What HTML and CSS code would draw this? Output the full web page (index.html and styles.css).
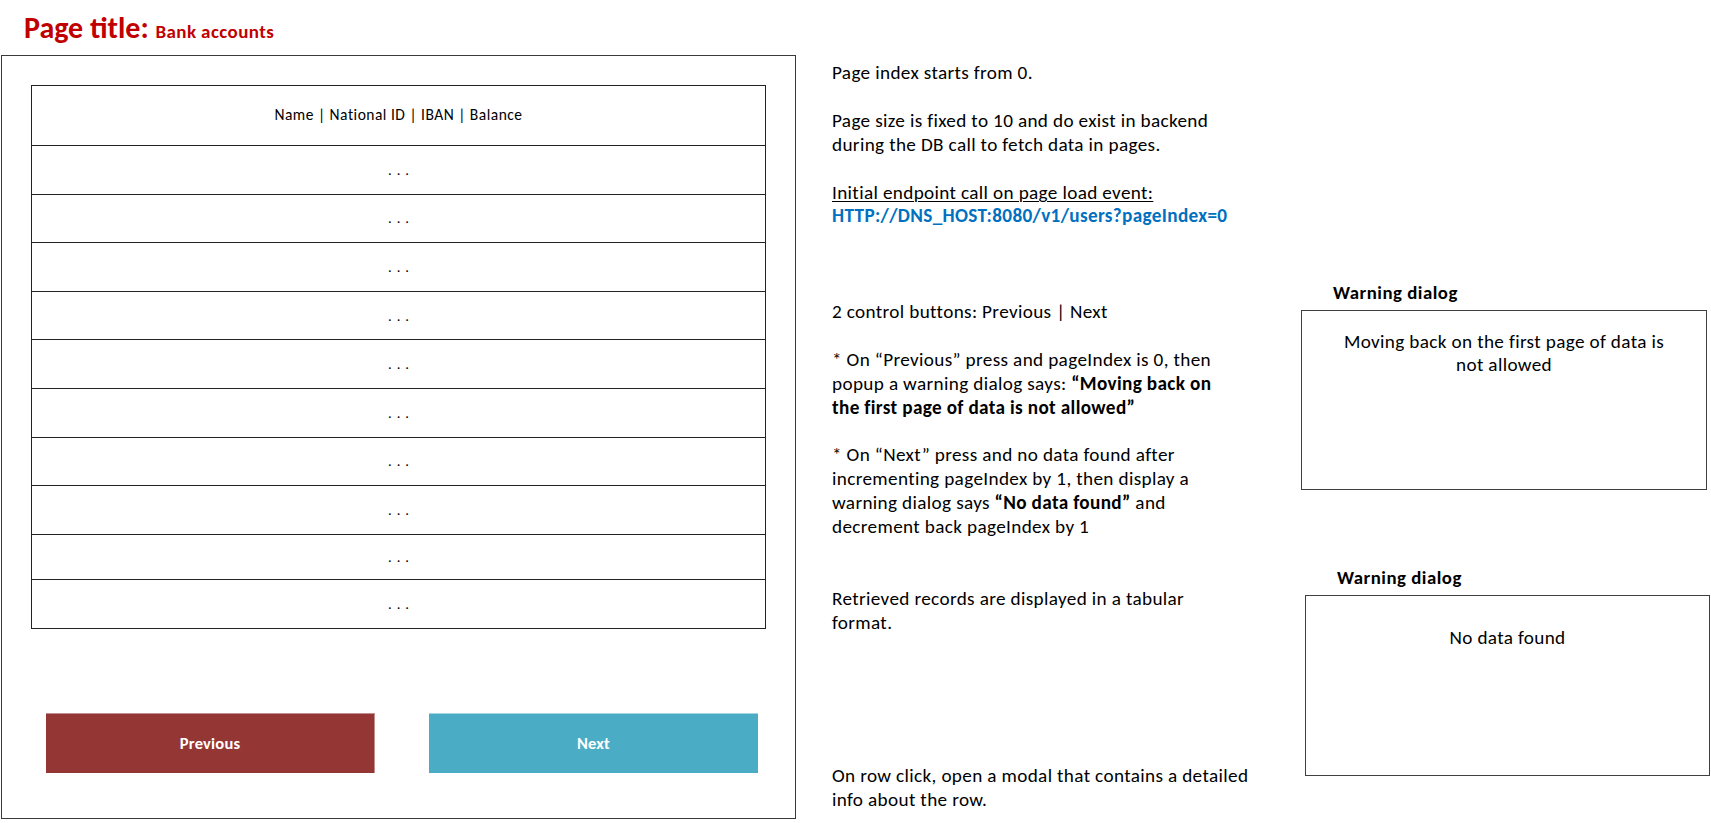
FILE: index.html
```html
<!DOCTYPE html>
<html lang="en">
<head>
<meta charset="utf-8">
<title>Bank accounts – paging spec</title>
<link rel="stylesheet" href="styles.css">
</head>
<body>
<div class="page">
  <section class="mock">
    <h1 class="title">Page title: <span class="title-sub">Bank accounts</span></h1>
    <div class="frame">
      <div class="table">
        <div class="row head">Name | National ID | IBAN | Balance</div>
        <div class="row">...</div>
        <div class="row">...</div>
        <div class="row">...</div>
        <div class="row">...</div>
        <div class="row">...</div>
        <div class="row">...</div>
        <div class="row">...</div>
        <div class="row">...</div>
        <div class="row short">...</div>
        <div class="row">...</div>
      </div>
      <div class="controls">
        <button class="btn btn-prev" type="button">Previous</button>
        <button class="btn btn-next" type="button">Next</button>
      </div>
    </div>
  </section>

  <section class="notes">
    <p>Page index starts from 0.</p>
    <p class="gap1">Page size is fixed to 10 and do exist in backend<br>during the DB call to fetch data in pages.</p>
    <p class="gap1"><span class="ul">Initial endpoint call on page load event:</span><br><strong class="url">HTTP://DNS_HOST:8080/v1/users?pageIndex=0</strong></p>
    <p class="gap3">2 control buttons: Previous | Next</p>
    <p class="gap1">* On “Previous” press and pageIndex is 0, then<br>popup a warning dialog says: <strong>“Moving back on<br>the first page of data is not allowed”</strong></p>
    <p class="gap1">* On “Next” press and no data found after<br>incrementing pageIndex by 1, then display a<br>warning dialog says <strong>“No data found”</strong> and<br>decrement back pageIndex by 1</p>
    <p class="gap2">Retrieved records are displayed in a tabular<br>format.</p>
    <p class="gap-end">On row click, open a modal that contains a detailed<br>info about the row.</p>
  </section>

  <section class="dialogs">
    <div class="dialog dialog-1">
      <div class="dialog-label">Warning dialog</div>
      <div class="dialog-box">Moving back on the first page of data is<br>not allowed</div>
    </div>
    <div class="dialog dialog-2">
      <div class="dialog-label">Warning dialog</div>
      <div class="dialog-box">No data found</div>
    </div>
  </section>
</div>
</body>
</html>
```

FILE: styles.css
```css
* {
  box-sizing: border-box;
}

html, body {
  margin: 0;
  padding: 0;
  background: #ffffff;
}

body {
  font-family: "Carlito", "Lato", "Liberation Sans", sans-serif;
  color: #000000;
  width: 1711px;
  height: 823px;
  overflow: hidden;
}

.page {
  display: flex;
  align-items: flex-start;
  height: 823px;
}

/* ---------- left mock ---------- */
.mock {
  width: 796px;
  padding-left: 1px;
  flex: none;
}

.title {
  margin: 0;
  height: 55px;
  padding: 12px 0 0 23px;
  font-size: 30px;
  line-height: 32px;
  font-weight: 700;
  color: #c00000;
  white-space: nowrap;
}

.title-sub {
  font-size: 19px;
  letter-spacing: 0.4px;
}

.frame {
  width: 795px;
  height: 764px;
  border: 1px solid #3a3a3a;
  padding: 29px 29px 0 29px;
}

.table {
  width: 735px;
  border: 1px solid #222222;
  border-bottom: none;
}

.row {
  display: flex;
  align-items: center;
  justify-content: center;
  height: 48.6px;
  padding-left: 5px;
  border-bottom: 1px solid #222222;
  font-size: 14.67px;
  letter-spacing: 5px;
}

.row.head {
  height: 60px;
  padding: 0 0 3px 0;
  font-size: 15.5px;
  letter-spacing: 0.5px;
}

.row.short {
  height: 45.4px;
}

.controls {
  display: flex;
  gap: 54px;
  margin-top: 84px;
  padding-left: 15px;
}

.btn {
  width: 329px;
  height: 60px;
  border: none;
  margin: 0;
  padding: 0;
  font-family: inherit;
  font-size: 16.5px;
  letter-spacing: 0.2px;
  font-weight: 700;
  color: #ffffff;
}

.btn-prev {
  background: #943634;
  border-top: 1px solid #c28f8e;
  border-right: 1px solid #c28f8e;
}

.btn-next {
  background: #4bacc6;
  border-top: 1px solid #a6d4e1;
}

/* ---------- notes ---------- */
.notes {
  flex: none;
  width: 469px;
  margin-left: 36px;
  padding-top: 61px;
  font-size: 19.2px;
  letter-spacing: 0.35px;
  line-height: 23.9px;
}

.notes p {
  margin: 0;
  white-space: nowrap;
}

.notes .gap1 {
  margin-top: 23.9px;
}

.notes .gap2 {
  margin-top: 47.8px;
}

.notes .gap3 {
  margin-top: 71.7px;
}

.notes .gap-end {
  margin-top: 129px;
}

.ul {
  text-decoration: underline;
  text-decoration-thickness: 1px;
  text-underline-offset: 2px;
}

.url {
  color: #0070c0;
}

/* ---------- dialogs ---------- */
.dialogs {
  flex: none;
  display: flex;
  flex-direction: column;
  padding-top: 282px;
}

.dialog-label {
  padding-left: 32px;
  font-size: 18.8px;
  letter-spacing: 0.5px;
  font-weight: 700;
  line-height: 22px;
  height: 28px;
}

.dialog-box {
  border: 1px solid #404040;
  text-align: center;
  font-size: 19.2px;
  letter-spacing: 0.35px;
  line-height: 23px;
}

.dialog-1 .dialog-box {
  width: 406px;
  height: 180px;
  padding-top: 19px;
}

.dialog-2 {
  margin-top: 77px;
  margin-left: 4px;
}

.dialog-2 .dialog-box {
  width: 405px;
  height: 181px;
  padding-top: 30px;
}
```
